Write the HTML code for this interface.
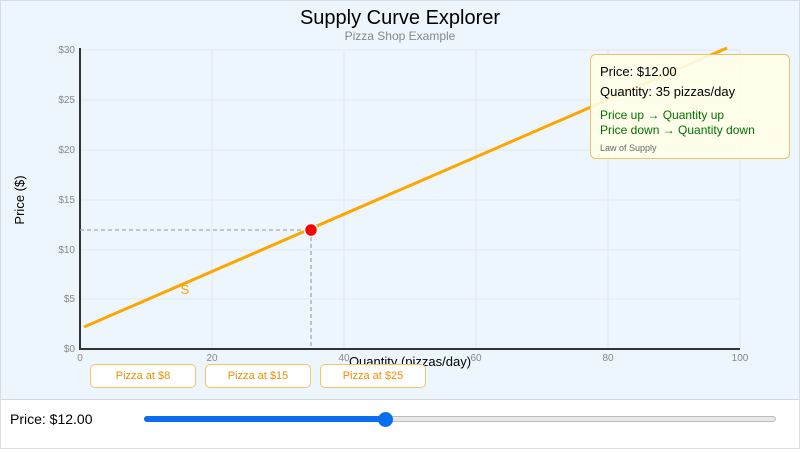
<!DOCTYPE html>
<html><head><meta charset="utf-8"><style>
body{margin:0;width:800px;height:452px;overflow:hidden;font-family:"Liberation Sans",sans-serif;background:#fff}
.top{position:absolute;left:0;top:0;width:798px;height:398px;background:#eef6fd;border:1px solid #d8dde3;border-bottom:2px solid #d4d8dd}
.bot{position:absolute;left:0;top:400px;width:798px;height:48px;border:1px solid #ddd;border-top:none;background:#fff}
.btn{position:absolute;top:364px;width:104px;height:22px;border:1px solid #f7c36a;border-radius:5px;background:#fff;color:#f28c00;font-size:11px;text-align:center;line-height:22px}
</style></head><body>
<div class="top"></div>
<svg style="position:absolute;left:0;top:0" width="800" height="400">
<text x="400" y="24" text-anchor="middle" font-size="20" fill="#000">Supply Curve Explorer</text>
<text x="400" y="40" text-anchor="middle" font-size="12" fill="#888">Pizza Shop Example</text>
<g stroke="#e2e7ee" stroke-width="1">
<line x1="80" y1="50" x2="740" y2="50"/><line x1="80" y1="100" x2="740" y2="100"/><line x1="80" y1="150" x2="740" y2="150"/><line x1="80" y1="200" x2="740" y2="200"/><line x1="80" y1="250" x2="740" y2="250"/><line x1="80" y1="299" x2="740" y2="299"/>
<line x1="212" y1="50" x2="212" y2="349"/><line x1="344" y1="50" x2="344" y2="349"/><line x1="476" y1="50" x2="476" y2="349"/><line x1="608" y1="50" x2="608" y2="349"/><line x1="740" y1="50" x2="740" y2="349"/>
</g>
<g font-size="10" fill="#888" text-anchor="end">
<text x="75" y="53">$30</text><text x="75" y="103">$25</text><text x="75" y="153">$20</text><text x="75" y="203">$15</text><text x="75" y="253">$10</text><text x="75" y="302">$5</text><text x="75" y="352">$0</text>
</g>
<g font-size="10" fill="#888" text-anchor="middle">
<text x="80" y="361">0</text><text x="212" y="361">20</text><text x="344" y="361">40</text><text x="476" y="361">60</text><text x="608" y="361">80</text><text x="740" y="361">100</text>
</g>
<text x="410" y="366" text-anchor="middle" font-size="13" fill="#000">Quantity (pizzas/day)</text>
<text transform="translate(24,200) rotate(-90)" text-anchor="middle" font-size="13" fill="#000">Price ($)</text>
<line x1="80" y1="48" x2="80" y2="350" stroke="#333" stroke-width="2"/>
<line x1="79" y1="349" x2="740" y2="349" stroke="#333" stroke-width="2"/>
<line x1="84" y1="327" x2="727" y2="48" stroke="#ffa500" stroke-width="3"/>
<text x="185" y="294" text-anchor="middle" font-size="13" fill="#ffa500">S</text>
<line x1="80" y1="230" x2="311" y2="230" stroke="#a0a8b4" stroke-width="1.3" stroke-dasharray="4,3"/>
<line x1="311" y1="230" x2="311" y2="349" stroke="#a0a8b4" stroke-width="1.3" stroke-dasharray="4,3"/>
<circle cx="311" cy="230" r="6.5" fill="#f00" stroke="#fff" stroke-width="1.5"/>
<rect x="590.5" y="54.5" width="199" height="104" rx="5" fill="rgba(255,255,232,0.9)" stroke="#e6c56a"/>
<text x="600" y="76" font-size="13" fill="#000">Price: $12.00</text>
<text x="600" y="96" font-size="13" fill="#000">Quantity: 35 pizzas/day</text>
<text x="600" y="119" font-size="12" fill="#007000">Price up → Quantity up</text>
<text x="600" y="134" font-size="12" fill="#007000">Price down → Quantity down</text>
<text x="600" y="151" font-size="9" fill="#666">Law of Supply</text>
</svg>
<div class="btn" style="left:90px">Pizza at $8</div>
<div class="btn" style="left:205px">Pizza at $15</div>
<div class="btn" style="left:320px">Pizza at $25</div>
<div class="bot"></div>
<div style="position:absolute;left:10px;top:411px;font-size:14px">Price: $12.00</div>
<div style="position:absolute;left:144px;top:416px;width:632px;height:6px;border-radius:3px;background:#e8e8e8;border:1px solid #bbb;box-sizing:border-box"></div>
<div style="position:absolute;left:144px;top:416px;width:242px;height:6px;border-radius:3px;background:#0a6ef0"></div>
<div style="position:absolute;left:378px;top:412px;width:15px;height:15px;border-radius:50%;background:#0a6ef0"></div>
</body></html>
